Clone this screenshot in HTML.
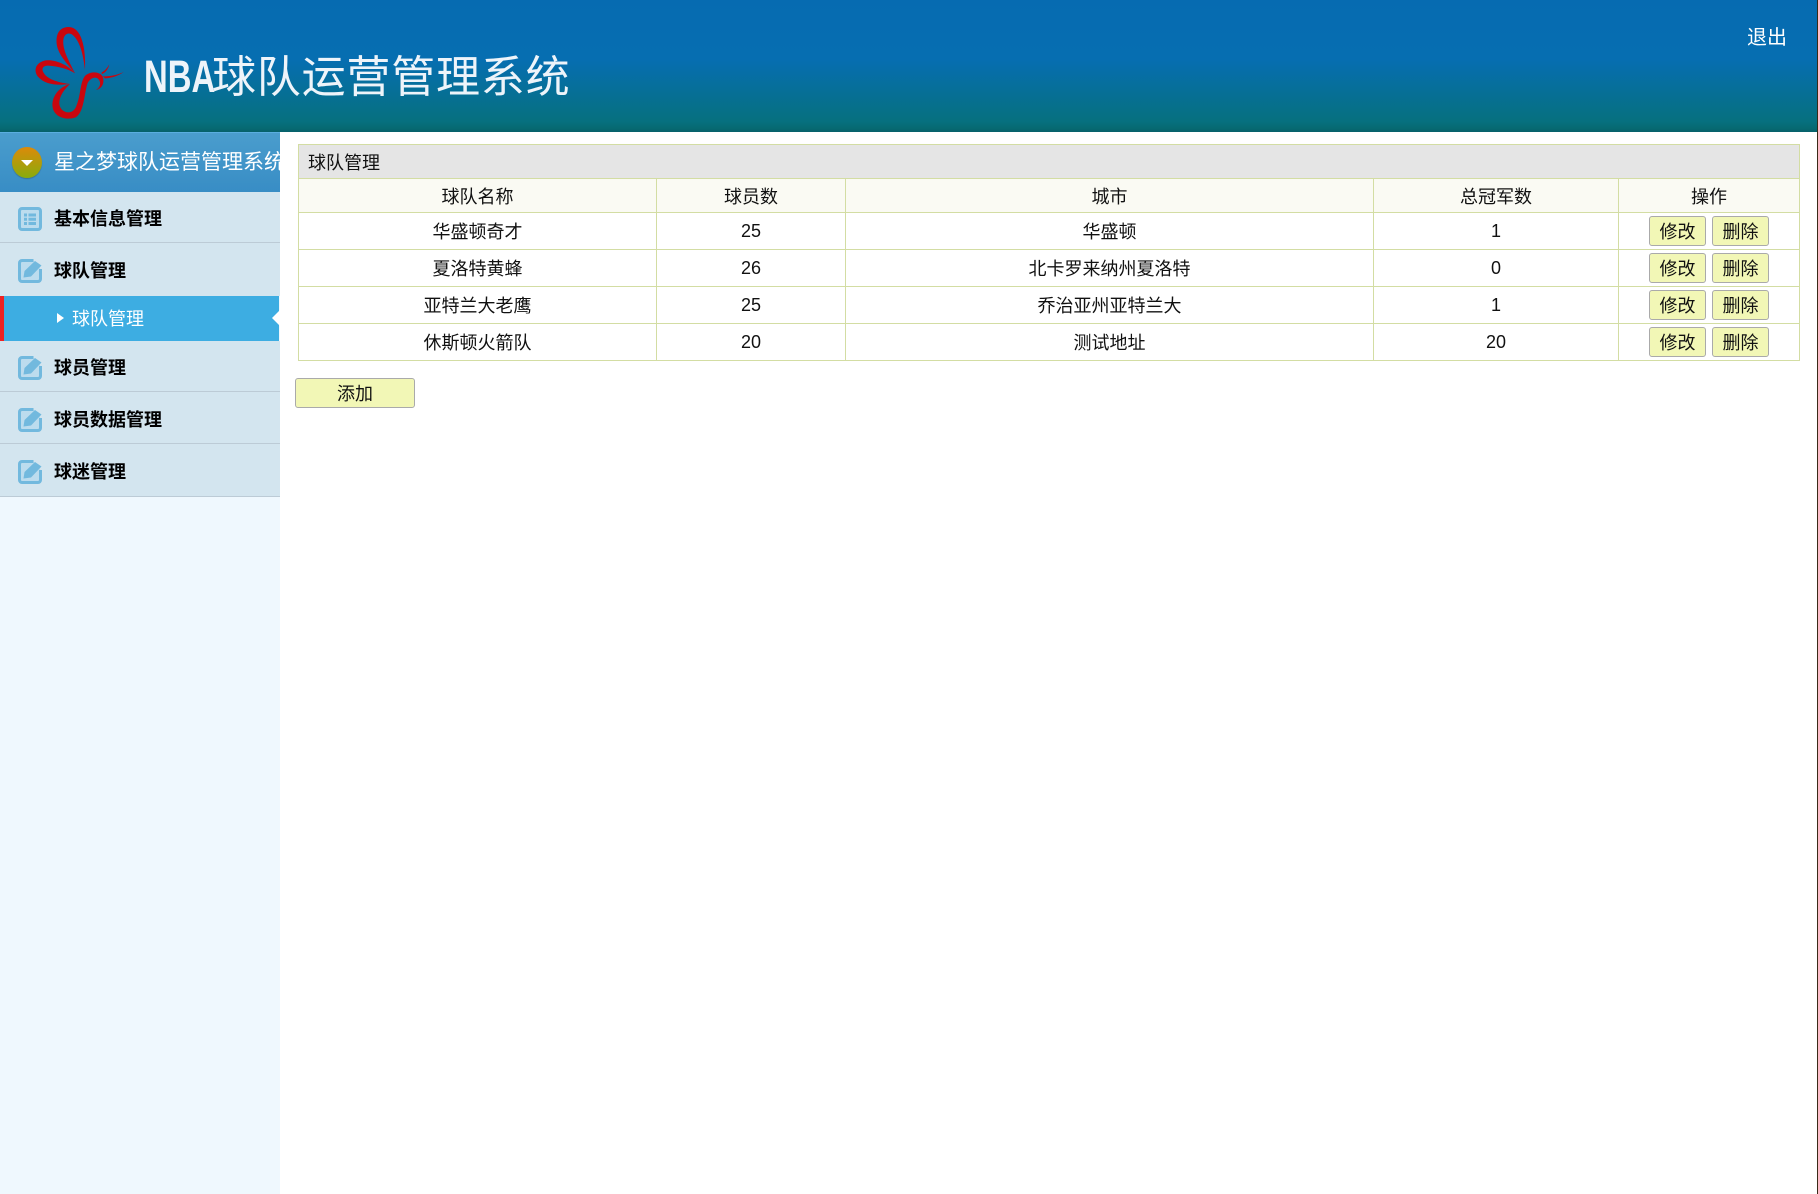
<!DOCTYPE html>
<html lang="zh">
<head>
<meta charset="utf-8">
<title>NBA球队运营管理系统</title>
<style>
*{box-sizing:border-box}
html,body{margin:0;padding:0;width:1818px;height:1194px;overflow:hidden;background:#fff;font-family:"Liberation Sans","Noto Sans CJK SC",sans-serif;font-size:18px;color:#111}
.abs{position:absolute}
#hd{left:0;top:0;width:1818px;height:132px;background:linear-gradient(#066bb1 0,#066eb1 45%,#06707f 92%,#066a72 97%,#06606a 100%)}
#title{left:144px;top:43px;height:60px;line-height:60px;color:#eef4fa;white-space:nowrap;font-size:44px;font-family:"Noto Sans CJK SC",sans-serif;letter-spacing:.8px}
#title b{display:inline-block;font:bold 45px/60px "Liberation Sans",sans-serif;transform:scaleX(.73);transform-origin:0 50%;width:68px;letter-spacing:0}
#logout{left:1747px;top:23px;color:#fff;font-size:20px;line-height:30px}
#side{left:0;top:132px;width:280px;height:1062px;background:#eff8fe}
#sh{left:0;top:0;width:280px;height:60px;background:linear-gradient(#4a9dcd,#388dc5);border-top:1px solid #5aaee0;overflow:hidden;color:#fff;font-size:21px;line-height:60px;white-space:nowrap;padding-left:54px}
#ball{left:12px;top:14px;width:30px;height:31px;border-radius:50%;background:linear-gradient(#dc8a0a,#88ac0c);box-shadow:0 1px 1px #3a6f96}
#ball i{position:absolute;left:9px;top:13px;border:6px solid transparent;border-top:6px solid #fff;border-bottom:0}
.m{position:absolute;left:0;width:280px;background:#d3e5ef;border-bottom:1px solid #bccbd6;font-weight:bold;color:#000;line-height:54px;padding-left:54px;font-size:18px;white-space:nowrap}
.m.d{line-height:56px}
.m svg{position:absolute;left:18px;top:15px;width:24px;height:24px}
#sub{left:0;top:164px;width:279px;height:45px;background:#3dade2;border-left:4px solid #ee2222;color:#fff;font-size:18px;line-height:47px;padding-left:68px}
#sub:before{content:"";position:absolute;left:53px;top:17px;border:5px solid transparent;border-left:7px solid #fff;border-right:0}
#sub:after{content:"";position:absolute;right:-1px;top:14px;border:8px solid transparent;border-right:8px solid #fff;border-left:0}
table{position:absolute;left:298px;top:144px;width:1501px;border-collapse:collapse;table-layout:fixed}
td,th{border:1px solid #d3dda3;text-align:center;padding:0;font-weight:normal;font-size:18px;color:#111}
.t td{height:34px;background:#e5e5e5;text-align:left;padding-left:9px}
.h th{height:34px;background:#fafaf3}
.r td{height:37px}
button{font:18px "Liberation Sans","Noto Sans CJK SC",sans-serif;color:#111;background:#f2f7b6;border:1px solid #aaa;border-radius:3px;padding:2px 0 0;height:30px;width:57px;margin:0 3px;vertical-align:middle;line-height:27px}
#add{left:295px;top:378px;width:120px;height:30px;margin:0}
#edge{left:1817px;top:0;width:1px;height:1194px;background:#3a2a18}
</style>
</head>
<body>
<div id="hd" class="abs">
<svg class="abs" style="left:20px;top:15px" width="120" height="110" viewBox="0 0 360 330"><g fill="#c9060e">
<path d="M195 165C198 100 185 35 145 36C115 36 103 65 113 100C123 130 150 155 165 175C148 140 127 105 130 75C132 58 145 50 158 60C180 78 190 120 195 165Z"/>
<path d="M165 175C140 145 95 130 70 138C48 145 40 165 53 184C75 210 115 212 150 207C120 203 85 195 72 175C62 160 70 152 85 152C115 154 145 162 165 175Z"/>
<path d="M150 207C118 215 93 245 98 277C103 307 140 317 167 307C192 292 192 240 202 207C207 192 225 182 235 192C243 202 243 215 228 225C245 222 255 205 248 185C240 170 215 168 198 180C180 195 183 240 170 270C163 295 140 298 125 283C110 265 120 235 150 207Z"/>
<path d="M245 172C255 168 262 158 268 148C265 162 255 175 245 177Z"/>
<path d="M248 184C270 185 295 180 312 170C295 184 270 190 255 190Z"/></g></svg>
<div id="title" class="abs"><b>NBA</b>球队运营管理系统</div>
<div id="logout" class="abs">退出</div>
</div>
<div id="side" class="abs">
<div id="sh" class="abs"><div id="ball" class="abs"><i></i></div>星之梦球队运营管理系统</div>
<div class="m" style="top:60px;height:51px"><svg viewBox="0 0 24 24"><rect x="1.500" y="1.500" width="21" height="21" rx="2.500" fill="#bcdcee" stroke="#72b9de" stroke-width="3"/><path d="M6 6.500h3v3H6zM10.500 6.500h7.500v3h-7.500zM6 10.800h3v3H6zM10.500 10.800h7.500v3h-7.500zM6 15h3v3H6zM10.500 15h7.500v3h-7.500z" fill="#72b9de"/></svg>基本信息管理</div>
<div class="m d" style="top:111px;height:53px;border-bottom:0"><svg viewBox="0 0 24 24" style="top:16px"><path d="M15.500 1.500H4A2.500 2.500 0 0 0 1.500 4v16A2.500 2.500 0 0 0 4 22.500h16a2.500 2.500 0 0 0 2.500-2.500V10" fill="#bcdcee" stroke="#72b9de" stroke-width="3"/><path d="M5.500 18.500l1-6.500L17 2l6.500 4.500L13 17.500z" fill="#72b9de"/></svg>球队管理</div>
<div id="sub" class="abs">球队管理</div>
<div class="m" style="top:209px;height:51px"><svg viewBox="0 0 24 24"><path d="M15.500 1.500H4A2.500 2.500 0 0 0 1.500 4v16A2.500 2.500 0 0 0 4 22.500h16a2.500 2.500 0 0 0 2.500-2.500V10" fill="#bcdcee" stroke="#72b9de" stroke-width="3"/><path d="M5.500 18.500l1-6.500L17 2l6.500 4.500L13 17.500z" fill="#72b9de"/></svg>球员管理</div>
<div class="m d" style="top:260px;height:52px"><svg viewBox="0 0 24 24" style="top:16px"><path d="M15.500 1.500H4A2.500 2.500 0 0 0 1.500 4v16A2.500 2.500 0 0 0 4 22.500h16a2.500 2.500 0 0 0 2.500-2.500V10" fill="#bcdcee" stroke="#72b9de" stroke-width="3"/><path d="M5.500 18.500l1-6.500L17 2l6.500 4.500L13 17.500z" fill="#72b9de"/></svg>球员数据管理</div>
<div class="m d" style="top:312px;height:53px"><svg viewBox="0 0 24 24" style="top:16px"><path d="M15.500 1.500H4A2.500 2.500 0 0 0 1.500 4v16A2.500 2.500 0 0 0 4 22.500h16a2.500 2.500 0 0 0 2.500-2.500V10" fill="#bcdcee" stroke="#72b9de" stroke-width="3"/><path d="M5.500 18.500l1-6.500L17 2l6.500 4.500L13 17.500z" fill="#72b9de"/></svg>球迷管理</div>
</div>
<table>
<colgroup><col style="width:358px"><col style="width:189px"><col style="width:528px"><col style="width:245px"><col style="width:181px"></colgroup>
<tr class="t"><td colspan="5">球队管理</td></tr>
<tr class="h"><th>球队名称</th><th>球员数</th><th>城市</th><th>总冠军数</th><th>操作</th></tr>
<tr class="r"><td>华盛顿奇才</td><td>25</td><td>华盛顿</td><td>1</td><td><button>修改</button><button>删除</button></td></tr>
<tr class="r"><td>夏洛特黄蜂</td><td>26</td><td>北卡罗来纳州夏洛特</td><td>0</td><td><button>修改</button><button>删除</button></td></tr>
<tr class="r"><td>亚特兰大老鹰</td><td>25</td><td>乔治亚州亚特兰大</td><td>1</td><td><button>修改</button><button>删除</button></td></tr>
<tr class="r"><td>休斯顿火箭队</td><td>20</td><td>测试地址</td><td>20</td><td><button>修改</button><button>删除</button></td></tr>
</table>
<button id="add" class="abs">添加</button>
<div id="edge" class="abs"></div>
</body>
</html>
